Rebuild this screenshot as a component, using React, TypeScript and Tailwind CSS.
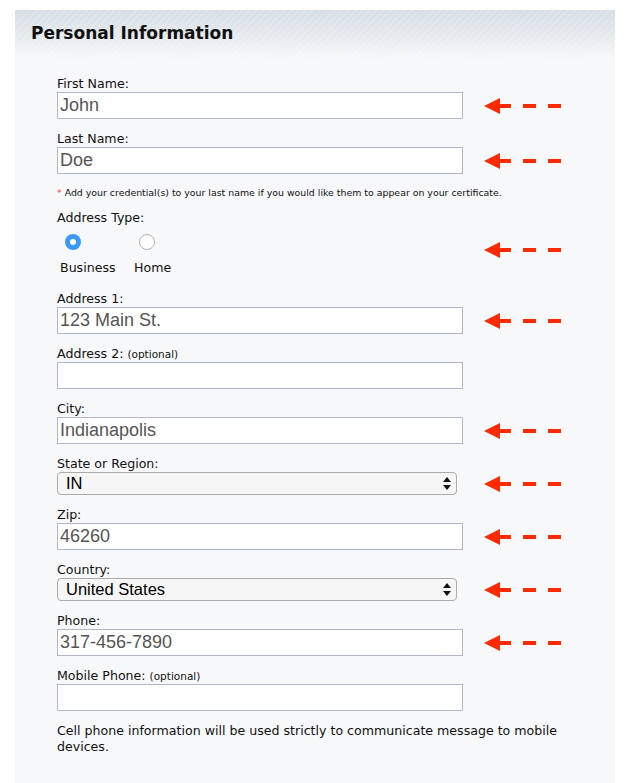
import React from "react"

const labelFont = "font-['DejaVu_Sans',Verdana,sans-serif]"
const valueFont = "font-['Liberation_Sans',Arial,sans-serif]"

const Arrow = ({ gap = "ml-[20px]" }: { gap?: string }) => (
  <svg width="80" height="18" viewBox="0 0 80 18" className={`${gap} shrink-0`}>
    <polygon points="1,9 17,1 17,17" fill="#ff2a00" />
    <rect x="15" y="7" width="13" height="4" fill="#ff2a00" />
    <rect x="40" y="7" width="13" height="4" fill="#ff2a00" />
    <rect x="65" y="7" width="13" height="4" fill="#ff2a00" />
  </svg>
)

interface FieldProps {
  label: string
  optional?: boolean
  value?: string
  arrow?: boolean
}

const TextField: React.FC<FieldProps> = ({ label, optional, value, arrow }) => (
  <div className="mb-[12px]">
    <div className={`${labelFont} text-[12.6px] leading-[16px] text-[#111]`}>
      {label}
      {optional && <span className="text-[10.5px] ml-[4px]">(optional)</span>}
    </div>
    <div className="flex items-center">
      <div
        className={`${valueFont} w-[406px] h-[27px] bg-white border border-[#b3b6c9] pl-[2px] text-[18px] leading-[25px] text-[#555]`}
      >
        {value}
      </div>
      {arrow && <Arrow />}
    </div>
  </div>
)

const SelectField: React.FC<FieldProps> = ({ label, value, arrow }) => (
  <div className="mb-[12px]">
    <div className={`${labelFont} text-[12.6px] leading-[16px] text-[#111]`}>{label}</div>
    <div className="flex items-center">
      <div className="w-[400px] h-[23px] rounded-[4px] border border-[#ababab] bg-[#f6f6f6] flex items-center justify-between pl-[8px] pr-[5px]">
        <span className={`${valueFont} text-[16.5px] text-black`}>{value}</span>
        <svg width="8" height="13" viewBox="0 0 8 13">
          <polygon points="4,0 8,5 0,5" fill="#111" />
          <polygon points="0,8 8,8 4,13" fill="#111" />
        </svg>
      </div>
      {arrow && <Arrow gap="ml-[26px]" />}
    </div>
  </div>
)

export default function App() {
  return (
    <div className="w-[638px] h-[783px] bg-white pt-[10px] overflow-hidden">
      <div className="ml-[15px] w-[600px] h-[773px] bg-[#f7f8fa]">
        <div className="h-[50px] pl-[16px] pt-[11px] bg-[image:repeating-linear-gradient(135deg,rgba(255,255,255,0.14)_0px,rgba(255,255,255,0.14)_2px,transparent_2px,transparent_5px),linear-gradient(to_bottom,#d6dee4,#e6ebee_55%,#f7f8fa)]">
          <h2 className={`${labelFont} font-bold text-[17px] leading-[24px] text-[#111]`}>Personal Information</h2>
        </div>

        <div className="pl-[42px] pt-[16px]">
          <TextField label="First Name:" value="John" arrow />
          <TextField label="Last Name:" value="Doe" arrow />

          <div className={`${labelFont} text-[9.4px] leading-[14px] text-[#111] mt-[1px]`}>
            <span className="text-[#ff3b1f]">*</span> Add your credential(s) to your last name if you would like them to appear on your certificate.
          </div>

          <div className="flex items-start mt-[10px]">
            <div className="w-[406px]">
              <div className={`${labelFont} text-[12.6px] leading-[16px] text-[#111]`}>Address Type:</div>
              <div className="flex pl-[3px] mt-[8px]">
                <div className="w-[74px]">
                  <div className="ml-[5px] w-[16px] h-[16px] rounded-full bg-[#3b99fc] flex items-center justify-center">
                    <div className="w-[6px] h-[6px] rounded-full bg-white" />
                  </div>
                  <div className={`${labelFont} text-[12.6px] leading-[16px] text-[#111] mt-[10px]`}>Business</div>
                </div>
                <div>
                  <div className="ml-[5px] w-[16px] h-[16px] rounded-full bg-white border border-[#b4b4b4]" />
                  <div className={`${labelFont} text-[12.6px] leading-[16px] text-[#111] mt-[10px]`}>Home</div>
                </div>
              </div>
            </div>
            <div className="mt-[31px]">
              <Arrow />
            </div>
          </div>

          <div className="mt-[15px]">
            <TextField label="Address 1:" value="123 Main St." arrow />
            <TextField label="Address 2:" optional />
            <TextField label="City:" value="Indianapolis" arrow />
            <SelectField label="State or Region:" value="IN" arrow />
            <TextField label="Zip:" value="46260" arrow />
            <SelectField label="Country:" value="United States" arrow />
            <TextField label="Phone:" value="317-456-7890" arrow />
            <TextField label="Mobile Phone:" optional />
          </div>

          <p className={`${labelFont} text-[12.6px] leading-[16px] text-[#111] w-[510px]`}>
            Cell phone information will be used strictly to communicate message to mobile devices.
          </p>
        </div>
      </div>
    </div>
  )
}
